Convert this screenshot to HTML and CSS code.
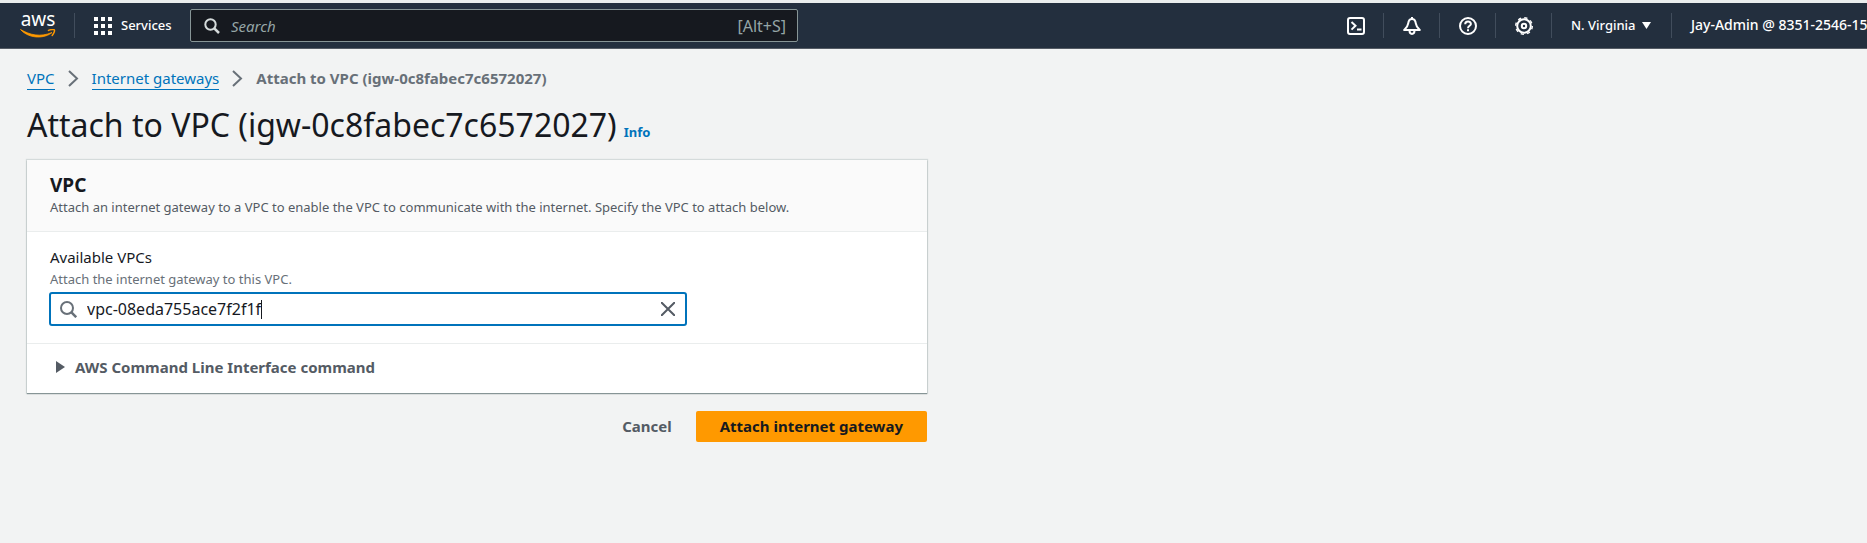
FILE: index.html
```html
<!DOCTYPE html>
<html lang="en">
<head>
<meta charset="utf-8">
<title>Attach to VPC</title>
<link rel="stylesheet" href="styles.css">
</head>
<body>
<header class="topbar">
  <a class="logo" href="#" aria-label="AWS home">
    <span class="logo-text">aws</span>
    <svg class="logo-smile" viewBox="0 0 36 9" width="36" height="9" aria-hidden="true"><path d="M.5.500C10 6 20 8.500 32 3.500c-6 5.500-22 7.500-31.500-3z" fill="#ff9900" stroke="#ff9900" stroke-width=".8" stroke-linejoin="round"/><path d="M28.500 1.400C31 .4 34 .3 34.400 1c.4.8-.4 3.600-2.200 5.500" fill="none" stroke="#ff9900" stroke-width="1.500" stroke-linecap="round"/></svg>
  </a>
  <button class="services" type="button">
    <svg width="18" height="18" viewBox="0 0 18 18" fill="#fff" aria-hidden="true"><path d="M0 0h4v4H0zM7 0h4v4H7zM14 0h4v4h-4zM0 7h4v4H0zM7 7h4v4H7zM14 7h4v4h-4zM0 14h4v4H0zM7 14h4v4H7zM14 14h4v4h-4z"/></svg>
    <span>Services</span>
  </button>
  <label class="global-search">
    <svg width="16" height="16" viewBox="0 0 16 16" fill="none" stroke="#d5dbdb" stroke-width="2" aria-hidden="true"><circle cx="6.500" cy="6.500" r="5.200"/><path d="M10.300 10.300l4.700 4.700" stroke-width="2.500"/></svg>
    <input type="text" placeholder="Search" aria-label="Search">
    <span class="shortcut">[Alt+S]</span>
  </label>
  <nav class="tools" aria-label="Account tools">
    <button class="tool" type="button" aria-label="CloudShell"><svg width="18" height="18" viewBox="0 0 18 18" fill="none" stroke="#fff" stroke-width="2" aria-hidden="true"><rect x="1" y="1" width="16" height="16" rx="2"/><path d="M4.500 5l4 3.800-4 3.800M10 12.500h4.500"/></svg></button>
    <button class="tool" type="button" aria-label="Notifications"><svg width="18" height="18" viewBox="0 0 18 18" fill="none" stroke="#fff" stroke-width="2" stroke-linejoin="round" aria-hidden="true"><path d="M9 2C6.500 2 5.500 4 5.200 6.300 4.800 9.500 3.500 11 1.200 13h15.600c-2.300-2-3.600-3.500-4-6.700C12.500 4 11.500 2 9 2zM9 0v2M6.500 13.500c0 4.500 5 4.500 5 0"/></svg></button>
    <button class="tool" type="button" aria-label="Help"><svg width="18" height="18" viewBox="0 0 18 18" fill="none" stroke="#fff" stroke-width="2" aria-hidden="true"><circle cx="9" cy="9" r="8"/><path d="M6.200 7.200c0-3.600 5.700-3.500 5.700-.3C11.900 8.800 9 8.800 9 11.200M9 12.300v2"/></svg></button>
    <button class="tool" type="button" aria-label="Settings"><svg width="18" height="18" viewBox="0 0 18 18" fill="none" stroke="#fff" aria-hidden="true"><circle cx="9" cy="9" r="6.800" stroke-width="2"/><circle cx="9" cy="9" r="8.300" stroke-width="1.400" stroke-dasharray="3.260 3.260"/><circle cx="9" cy="9" r="2.200" stroke-width="2"/></svg></button>
    <button class="region" type="button"><span>N. Virginia</span><svg width="9" height="7" viewBox="0 0 9 7" fill="#fff" aria-hidden="true"><path d="M0 0h9L4.500 7z"/></svg></button>
    <button class="account" type="button">Jay-Admin @ 8351-2546-15</button>
  </nav>
</header>
<main class="page">
  <nav class="crumbs" aria-label="Breadcrumbs">
    <a href="#">VPC</a>
    <svg width="11" height="17" viewBox="0 0 11 17" fill="none" stroke="#687078" stroke-width="2" aria-hidden="true"><path d="M1 1l8 7.500L1 16"/></svg>
    <a href="#">Internet gateways</a>
    <svg width="11" height="17" viewBox="0 0 11 17" fill="none" stroke="#687078" stroke-width="2" aria-hidden="true"><path d="M1 1l8 7.500L1 16"/></svg>
    <span class="current">Attach to VPC (igw-0c8fabec7c6572027)</span>
  </nav>
  <div class="title">
    <h1>Attach to VPC (igw-0c8fabec7c6572027)</h1>
    <a href="#">Info</a>
  </div>
  <form class="form">
    <section class="card">
      <div class="card-head">
        <h2>VPC</h2>
        <p>Attach an internet gateway to a VPC to enable the VPC to communicate with the internet. Specify the VPC to attach below.</p>
      </div>
      <div class="card-body">
        <label class="label" for="vpc">Available VPCs</label>
        <p class="hint" id="vpc-hint">Attach the internet gateway to this VPC.</p>
        <div class="field">
          <svg width="17" height="17" viewBox="0 0 17 17" fill="none" stroke="#687078" stroke-width="2" aria-hidden="true"><circle cx="7" cy="7" r="6"/><path d="M11.200 11.200l5 5" stroke-width="2.500"/></svg>
          <div class="entry">
            <input id="vpc" type="text" value="vpc-08eda755ace7f2f1f" aria-describedby="vpc-hint">
            <span class="caret"></span>
          </div>
          <button class="clear" type="button" aria-label="Clear"><svg width="14" height="14" viewBox="0 0 14 14" fill="none" stroke="#545b64" stroke-width="2" aria-hidden="true"><path d="M0 0l14 14M14 0L0 14"/></svg></button>
        </div>
      </div>
      <button class="expander" type="button" aria-expanded="false">
        <svg width="9" height="12" viewBox="0 0 9 12" fill="#545b64" aria-hidden="true"><path d="M0 0l9 6-9 6z"/></svg>
        <span>AWS Command Line Interface command</span>
      </button>
    </section>
    <div class="actions">
      <button class="cancel" type="button">Cancel</button>
      <button class="primary" type="button">Attach internet gateway</button>
    </div>
  </form>
</main>
</body>
</html>
```
FILE: styles.css
```css
* { box-sizing: border-box; }
body {
  margin: 0;
  background: #f2f3f3;
  color: #16191f;
  font-family: "Noto Sans", "Open Sans", sans-serif;
  font-size: 15px;
  line-height: 22px;
  overflow-x: hidden;
}
h1, h2, p { margin: 0; font-weight: 400; }
button, input { font: inherit; color: inherit; background: none; border: 0; padding: 0; }
input { outline: 0; min-width: 0; }
svg { flex: none; display: block; }
a { color: #0073bb; text-decoration: none; }

.topbar {
  display: flex;
  align-items: center;
  height: 49px;
  border-top: 3px solid #eaeded;
  border-bottom: 1px solid #545b64;
  background: #232f3e;
  color: #fff;
}
.logo {
  display: flex;
  flex-direction: column;
  align-items: center;
  width: 75px;
  padding-left: 2px;
  border-right: 1px solid #414d5c;
  color: #fff;
}
.logo-text { font-size: 19px; line-height: 13px; }
.logo-smile { margin-top: 3px; }
.services {
  display: flex;
  align-items: center;
  gap: 9px;
  width: 115px;
  padding-left: 19px;
  font-size: 13px;
  font-weight: 500;
}
.services span { padding-bottom: 2px; }
.global-search {
  display: flex;
  align-items: center;
  gap: 11px;
  flex: 0 1 608px;
  height: 33px;
  padding: 0 11px 0 13px;
  border: 1px solid #879596;
  border-radius: 2px;
  background: #16191f;
  color: #95a5a6;
}
.shortcut { font-size: 16px; }
.global-search input { flex: 1; }
.global-search input::placeholder { color: #95a5a6; font-style: italic; opacity: 1; }
.tools { display: flex; margin-left: auto; font-size: 13px; font-weight: 500; }
.tools button { height: 25px; border-right: 1px solid #414d5c; }
.tools .tool { display: flex; align-items: center; justify-content: center; width: 56px; }
.tools .region { display: flex; align-items: center; justify-content: space-between; width: 120px; padding: 0 20px 0 19px; }
.tools .region span { padding-bottom: 2px; }
.tools .account { width: 195px; padding: 0 0 2px 19px; border: 0; font-size: 14px; text-align: left; white-space: nowrap; overflow: hidden; }

.page { padding: 18px 27px; }
.crumbs { display: flex; align-items: center; gap: 13px; }
.crumbs a { border-bottom: 1px solid #0073bb; }
.current { padding-bottom: 1px; color: #687078; font-weight: 700; }
.title { display: flex; align-items: baseline; gap: 7px; margin-top: 15px; }
.title h1 { font-size: 32px; line-height: 40px; }
.title a { font-size: 13px; font-weight: 700; }

.form { max-width: 900px; margin-top: 15px; }
.card { background: #fff; box-shadow: 0 1px 1px #879596, 0 0 1px 1px #d5dbdb; }
.card-head { padding: 14px 23px 12px; background: #fafafa; border-bottom: 1px solid #eaeded; }
.card-head h2 { font-size: 19px; line-height: 22px; font-weight: 700; }
.card-head p { font-size: 13px; line-height: 23px; color: #545b64; }
.card-body { padding: 14px 22px 17px; }
.label, .hint { padding-left: 1px; }
.label { display: block; }
.hint { margin-bottom: 2px; font-size: 13px; color: #687078; }
.field {
  display: flex;
  align-items: center;
  max-width: 638px;
  height: 34px;
  padding: 0 10px 0 9px;
  border: 2px solid #0073bb;
  border-radius: 3px;
}
.entry { position: relative; display: flex; flex: 1; padding-left: 10px; font-size: 16px; }
.entry input { flex: 1; }
.caret { position: absolute; left: 184px; top: 2px; width: 1px; height: 19px; background: #16191f; }
.expander {
  display: flex;
  align-items: center;
  gap: 10px;
  width: 100%;
  padding: 12px 29px 15px;
  border-top: 1px solid #eaeded;
  color: #545b64;
  font-weight: 700;
}
.actions { display: flex; justify-content: flex-end; gap: 24px; margin-top: 18px; font-weight: 700; }
.actions button { height: 31px; padding-bottom: 2px; }
.cancel { color: #545b64; }
.actions .primary { padding: 0 24px 2px; border-radius: 2px; background: #ff9900; }
```
